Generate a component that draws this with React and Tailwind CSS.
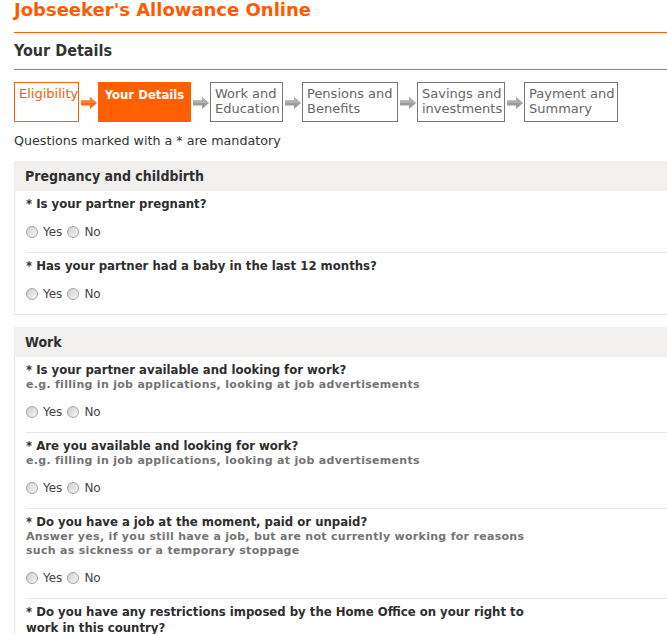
import React from "react";

const steps = [
  { label: ["Eligibility"], w: "w-[65px]", state: "done" },
  { label: ["Your Details"], w: "w-[93px]", state: "current" },
  { label: ["Work and", "Education"], w: "w-[73px]", state: "todo" },
  { label: ["Pensions and", "Benefits"], w: "w-[96px]", state: "todo" },
  { label: ["Savings and", "investments"], w: "w-[88px]", state: "todo" },
  { label: ["Payment and", "Summary"], w: "w-[94px]", state: "todo" },
];

const sections = [
  {
    title: "Pregnancy and childbirth",
    questions: [
      { q: "Is your partner pregnant?" },
      { q: "Has your partner had a baby in the last 12 months?" },
    ],
  },
  {
    title: "Work",
    questions: [
      {
        q: "Is your partner available and looking for work?",
        hint: "e.g. filling in job applications, looking at job advertisements",
      },
      {
        q: "Are you available and looking for work?",
        hint: "e.g. filling in job applications, looking at job advertisements",
      },
      {
        q: "Do you have a job at the moment, paid or unpaid?",
        hint: "Answer yes, if you still have a job, but are not currently working for reasons such as sickness or a temporary stoppage",
      },
      {
        q: "Do you have any restrictions imposed by the Home Office on your right to work in this country?",
      },
    ],
  },
];

function Arrow({ active }) {
  return (
    <div className="w-[19px] flex justify-center items-center pt-[2px]">
      <svg width="16" height="12" viewBox="0 0 16 12">
        <path
          d="M0 3.5 H9 V0 L16 6 L9 12 V8.5 H0 Z"
          fill={active ? "#ff6a10" : "#9c9c9c"}
        />
        <path d="M0 3.5 H9 V0 L16 6 H0 Z" fill={active ? "#ff7f33" : "#b0b0b0"} />
      </svg>
    </div>
  );
}

function Radio() {
  return (
    <span className="inline-block w-[12px] h-[12px] rounded-full border border-[#a3a3a3] bg-linear-to-br from-[#cfcfcf] to-[#f7f7f7]" />
  );
}

function Question({ item, first }) {
  return (
    <div
      className={`ml-[11px] pt-[5px] pb-[12px] ${
        first ? "" : "border-t border-[#e8e8e8]"
      }`}
    >
      <div className="max-w-[510px] text-[13px] leading-[16px] font-bold text-[#2e2e2e] font-['DejaVu_Sans_Condensed',sans-serif]">
        * {item.q}
      </div>
      {item.hint && (
        <div className="max-w-[510px] text-[11px] leading-[14px] tracking-[0.3px] font-bold text-[#747474] font-['DejaVu_Sans',sans-serif]">
          {item.hint}
        </div>
      )}
      <div className="mt-[12px] flex items-center h-[16px] text-[12px] text-[#444] font-['DejaVu_Sans',sans-serif]">
        <Radio />
        <span className="ml-[5px] mr-[5px]">Yes</span>
        <Radio />
        <span className="ml-[5px]">No</span>
      </div>
    </div>
  );
}

export default function App() {
  return (
    <div className="w-[667px] h-[634px] overflow-hidden bg-white">
      <div className="w-[720px] pl-[14px]">
        <h1 className="h-[20px] leading-[20px] text-[18px] font-bold text-[#ff5a00] font-['DejaVu_Sans',sans-serif]">
          Jobseeker's Allowance Online
        </h1>
        <div className="mt-[12px] border-t border-[#ff6000]" />
        <h2 className="py-[8px] leading-[20px] text-[16px] font-bold text-[#333] border-b border-[#ff6000] font-['DejaVu_Sans_Condensed',sans-serif]">
          Your Details
        </h2>

        <div className="mt-[12px] flex h-[40px]">
          {steps.map((s, i) => (
            <React.Fragment key={i}>
              {i > 0 && <Arrow active={i <= 1} />}
              <div
                className={`${s.w} h-[40px] text-[13px] leading-[15px] ${
                  s.state === "current"
                    ? "bg-[#ff5f00] text-white font-bold text-center pt-[5px] font-['DejaVu_Sans_Condensed',sans-serif]"
                    : s.state === "done"
                    ? "border border-[#ff6000] text-[#ff5a00] px-[4px] pt-[3px] font-['DejaVu_Sans',sans-serif]"
                    : "border border-[#777] text-[#666] px-[4px] pt-[3px] font-['DejaVu_Sans',sans-serif]"
                }`}
              >
                {s.label.map((l) => (
                  <div key={l} className="whitespace-nowrap">
                    {l}
                  </div>
                ))}
              </div>
            </React.Fragment>
          ))}
        </div>

        <p className="mt-[11px] text-[12.7px] leading-[16px] text-[#333] font-['DejaVu_Sans',sans-serif]">
          Questions marked with a * are mandatory
        </p>

        {sections.map((sec) => (
          <div
            key={sec.title}
            className="mt-[12px] border-l border-b border-[#e8e8e8]"
          >
            <div className="h-[30px] -ml-[1px] bg-[#f1f0ee] flex items-center pl-[11px] text-[14px] font-bold text-[#2e2e2e] font-['DejaVu_Sans_Condensed',sans-serif]">
              {sec.title}
            </div>
            {sec.questions.map((q, i) => (
              <Question key={q.q} item={q} first={i === 0} />
            ))}
          </div>
        ))}
      </div>
    </div>
  );
}
